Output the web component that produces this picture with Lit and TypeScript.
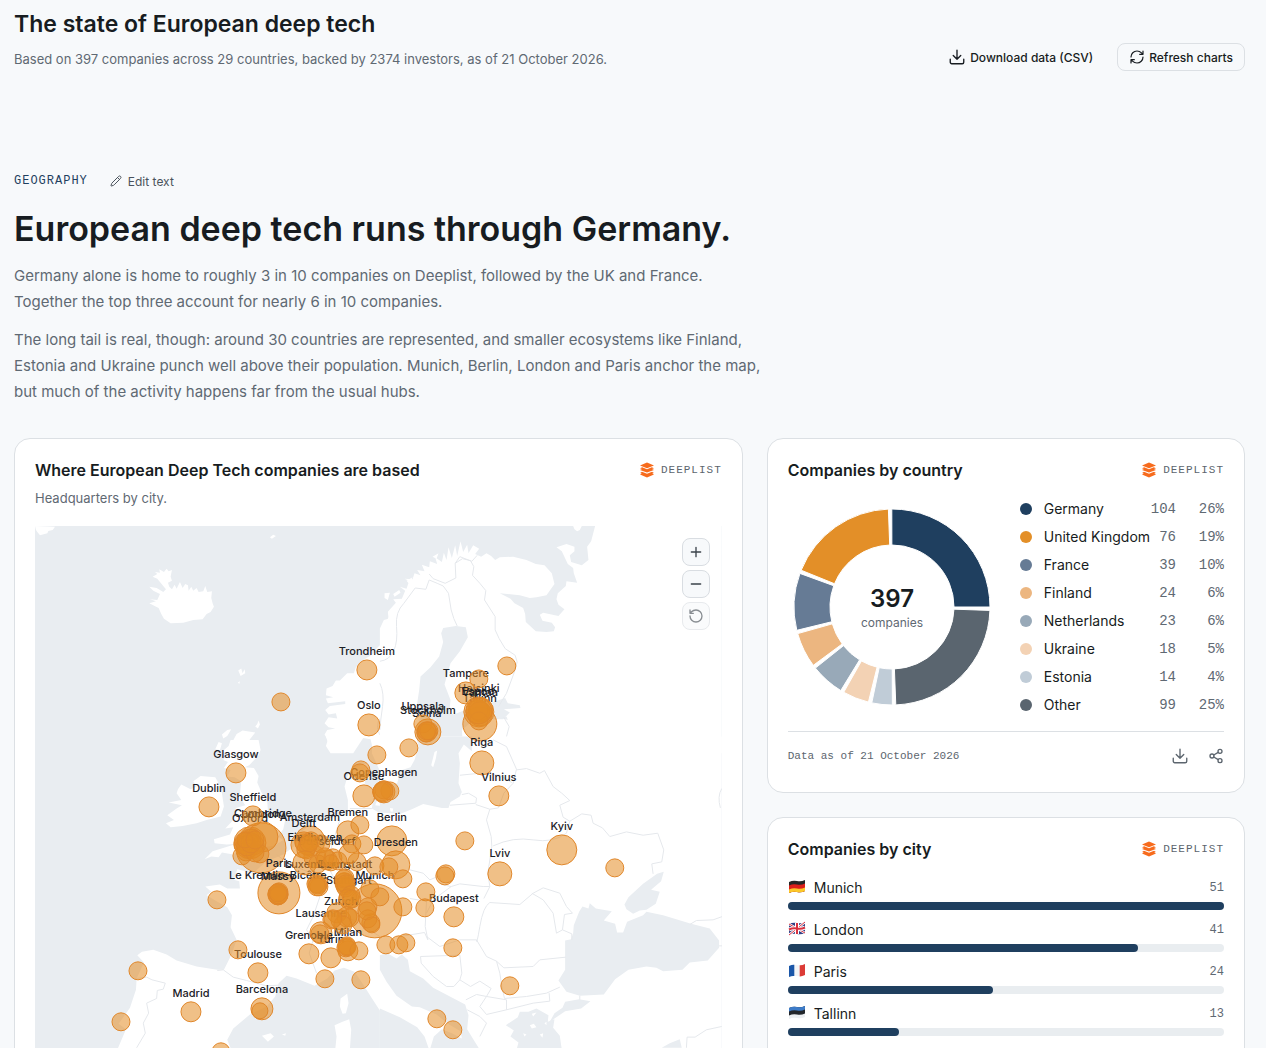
import { LitElement, html, svg, css, nothing } from "lit";
import { customElement, state } from "lit/decorators.js";

type City = [x: number, y: number, r: number, label?: string];

/* City bubbles, in map units: centre, radius, and a label for the larger hubs. */
const CITIES: City[] = [
  [375, 911, 27, "Munich"],
  [261, 848, 25, "London"],
  [279, 893, 21, "Paris"],
  [480, 724, 17, "Tallinn"],
  [250, 843, 16, "Oxford"],
  [562, 850, 15, "Kyiv"],
  [392, 841, 15, "Berlin"],
  [263, 837, 15, "Cambridge"],
  [310, 841, 15, "Amsterdam"],
  [479, 712, 15, "Helsinki"],
  [396, 865, 14, "Dresden"],
  [428, 732, 13, "Stockholm"],
  [304, 845, 13, "Delft"],
  [500, 874, 12, "Lviv"],
  [482, 763, 12, "Riga"],
  [262, 1009, 11, "Barcelona"],
  [369, 725, 11, "Oslo"],
  [348, 832, 11, "Bremen"],
  [364, 796, 11, "Odense"],
  [384, 792, 11, "Copenhagen"],
  [315, 857, 11, "Eindhoven"],
  [321, 933, 11, "Lausanne"],
  [466, 693, 11, "Tampere"],
  [367, 670, 10, "Trondheim"],
  [236, 773, 10, "Glasgow"],
  [209, 807, 10, "Dublin"],
  [253, 816, 10, "Sheffield"],
  [327, 860, 10, "Düsseldorf"],
  [318, 883, 10, "Luxembourg"],
  [345, 883, 10, "Darmstadt"],
  [278, 894, 10, "Le Kremlin-Bicêtre"],
  [278, 895, 10, "Massy"],
  [349, 899, 10, "Stuttgart"],
  [341, 920, 10, "Zurich"],
  [309, 954, 10, "Grenoble"],
  [331, 958, 10, "Turin"],
  [348, 951, 10, "Milan"],
  [258, 973, 10, "Toulouse"],
  [191, 1012, 10, "Madrid"],
  [454, 917, 10, "Budapest"],
  [499, 796, 10, "Vilnius"],
  [480, 711, 10, "Vantaa"],
  [478, 710, 10, "Espoo"],
  [427, 732, 10, "Solna"],
  [423, 724, 9, "Uppsala"],
  [243, 845, 9], [250, 838, 9], [254, 845, 10], [246, 852, 9], [248, 842, 10], [252, 838, 9], [244, 842, 9],
  [249, 849, 9], [242, 856, 9], [260, 854, 9], [255, 853, 9], [247, 846, 10], [251, 843, 10], [245, 840, 8], [255, 840, 9],
  [304, 843, 9], [308, 846, 9], [311, 841, 9], [306, 850, 9], [321, 844, 9], [309, 843, 9],
  [305, 863, 12], [318, 864, 9], [333, 858, 9], [338, 861, 9], [325, 857, 9], [331, 863, 8],
  [360, 825, 9], [352, 844, 9], [364, 845, 9], [357, 862, 9], [375, 866, 9], [349, 854, 10],
  [389, 867, 9], [403, 879, 9], [345, 878, 9], [344, 882, 9], [346, 888, 9], [345, 886, 9], [344, 879, 9], [346, 884, 9],
  [351, 895, 9], [348, 898, 9], [352, 899, 9], [370, 889, 9], [380, 897, 9], [319, 887, 9], [316, 884, 9], [318, 885, 9], [317, 887, 9],
  [368, 907, 9], [371, 923, 9], [368, 919, 9], [367, 911, 9], [372, 925, 8],
  [337, 913, 10], [347, 917, 10], [332, 920, 9], [350, 918, 9], [343, 925, 9], [333, 919, 9],
  [320, 934, 9], [347, 946, 9], [346, 948, 9], [347, 947, 8], [347, 947, 9],
  [279, 892, 9], [278, 896, 9], [279, 895, 9], [278, 893, 9],
  [359, 951, 9], [386, 945, 9], [399, 945, 9], [406, 943, 9], [453, 948, 9],
  [325, 979, 9], [361, 980, 9], [238, 950, 9], [217, 900, 9], [138, 971, 9], [121, 1022, 9], [221, 1052, 9], [260, 1011, 8],
  [426, 892, 9], [425, 908, 9], [403, 907, 9], [446, 874, 9], [445, 876, 9], [465, 841, 9], [615, 868, 9],
  [510, 986, 9], [437, 1019, 9], [453, 1030, 9],
  [479, 679, 9], [507, 666, 9], [478, 712, 12], [481, 710, 12], [480, 714, 12], [479, 721, 9], [479, 711, 13],
  [426, 733, 9], [429, 731, 9], [427, 731, 9], [409, 748, 9], [377, 755, 9], [361, 770, 9], [360, 773, 9],
  [390, 791, 9], [382, 792, 9], [384, 790, 9], [383, 792, 10], [281, 702, 9],
];

const COUNTRIES: [string, number, string, string][] = [
  ["Germany", 104, "26%", "#1f3f5f"],
  ["United Kingdom", 76, "19%", "#e38f28"],
  ["France", 39, "10%", "#667b95"],
  ["Finland", 24, "6%", "#ecb680"],
  ["Netherlands", 23, "6%", "#98a9b8"],
  ["Ukraine", 18, "5%", "#f3d2b4"],
  ["Estonia", 14, "4%", "#c0ccd7"],
  ["Other", 99, "25%", "#5a656f"],
];

const TOP_CITIES: [string, number, string][] = [
  ["Munich", 51, "de"],
  ["London", 41, "gb"],
  ["Paris", 24, "fr"],
  ["Tallinn", 13, "ee"],
];

/* Coastlines and borders by map sheet; each sheet is digitised at three units per map unit. */
const SHEETS: { at: string; land: string; sea?: string; isles?: string; borders: string }[] = [
  {
    at: "translate(20 430)",
    land:
      "M45 288L105 290 98 300 85 303 82 310 60 316 52 306 48 300Z" +
      "M388 520L408 514 390 508 412 510 420 492 400 482 388 470 410 474 430 486 438 478 412 446 398 440 412 432 405 426 420 428 418 418 432 426 440 416 446 424 456 420 452 440 456 452 444 458 448 470 456 478 464 464 470 476 480 456 488 474 496 462 504 466 506 482 514 470 520 482 530 474 536 486 550 484 556 468 562 486 576 484 574 504 578 520 582 530 572 546 560 552 548 568 520 570 490 578 452 580 432 566 424 552 416 534 404 528 Z" +
      "M1120 540L1100 572 1106 584 1090 602 1096 610 1080 628 1086 640 1070 656 1060 672 1030 690 1008 712 1002 730 982 730 960 752 948 752 938 768 920 776 918 796 940 802 918 806 924 820 976 814 976 822 930 828 916 840 926 854 948 850 952 866 926 862 914 880 926 892 946 896 922 900 914 914 924 930 918 948 932 970 1000 970 1030 924 1052 928 1062 970 1120 970Z" +
      "M620 970L634 942 650 912 668 902 706 908 690 928 680 944 708 946 718 960 714 970Z" +
      "M586 958L596 936 606 940 600 960ZM606 914L622 900 634 898 622 918 610 926ZM655 722L664 716 668 730 674 718 676 730 662 738ZM654 758L660 754 658 762ZM712 882L716 872 720 884 714 896 706 890ZM750 322L760 314 768 318 756 326ZM1094 490L1110 488 1104 510 1094 504Z",
    borders: "M1110 686Q1085 690 1084 730T1096 800T1084 860T1090 930",
  },
  {
    at: "translate(380 430)",
    land:
      "M0 596L12 570 26 566 24 545 48 518 40 508 66 506 76 482 60 470 80 476 88 452 74 446 98 448 104 430 122 436 112 420 134 424 126 404 148 412 150 394 172 402 166 382 186 396 192 368 200 390 206 352 216 384 226 346 232 378 242 334 250 366 262 344 266 370 280 346 298 356 286 372 304 380 320 370 334 378 346 390 360 382 400 380 440 390 468 402 494 406 516 430 524 462 500 496 470 502 450 504 420 496 360 490 392 506 404 520 430 534 436 552 438 576 468 604 500 606 522 604 526 592 516 578 488 572 480 554 490 548 536 558 554 538 536 524 530 508 534 490 558 468 560 454 592 458 582 430 580 414 564 402 546 364 530 352 560 342 584 350 584 364 570 376 574 396 606 406 626 390 622 350 634 334 646 288 1026 288 1026 970 236 970 252 944 274 962 268 920 248 926 246 900 270 880 332 868 370 868 390 848 372 838 422 834 420 826 384 820 376 804 340 816 256 840 222 854 208 850 212 810 194 764 212 700 240 664 264 622 258 592 228 588 190 594 184 610 190 636 178 680 152 712 122 740 118 780 112 820 122 862 110 900 118 930 110 970 0 970Z" +
      "M580 288L606 288 600 300 592 304 584 298ZM40 492L58 480 62 488 44 500ZM80 452L98 442 88 462ZM158 380L176 370 170 386Z",
    sea: "M380 860L366 864 384 870Z",
    borders:
      "M0 694Q30 690 42 662T50 590T72 520L106 474 138 478 148 450 172 460 190 468 206 490 214 540 222 566 232 588M148 432L160 446 196 460 228 444 226 400 248 386 272 392 282 410M226 400L240 380 276 394 292 376M282 410L278 436 300 460 318 482 314 510 346 560 346 600 358 626 376 656 406 676 412 696 406 720 380 790 356 830M372 862L388 890 380 920 388 970M0 760Q14 790 8 830T0 900",
  },
  {
    at: "translate(20 740)",
    land:
      "M442 226L470 206 486 196 446 188 484 180 470 160 474 148 484 134 512 148 530 140 520 124 542 108 586 112 598 134 606 160 612 200 602 230 560 240 530 250 488 258 452 262 438 250 462 240Z" +
      "M632 0L716 0 722 30 716 46 688 76 674 82 702 84 716 108 712 128 724 156 742 186 744 212 740 226 772 226 796 240 790 268 774 290 790 300 762 318 730 322 700 340 666 330 640 344 606 338 596 352 574 350 554 358 578 334 612 324 648 312 620 314 584 310 582 298 630 284 640 262 616 266 640 240 648 204 676 196 668 184 646 180 660 164 664 124 644 112 622 110 632 90 612 84 624 66 610 60 622 42 608 34 626 18Z" +
      "M974 140L984 106 1000 84 1044 70 1044 96 1034 130 1064 156 1056 206 1080 220 1120 212 1120 640 1082 646 1088 690 1120 726 1120 848 1080 812 1054 772 1030 734 1004 696 972 684 944 692 922 716 884 738 830 716 800 708 776 730 766 770 740 800 690 824 640 866 622 900 634 930 292 930 318 868 296 852 330 804 348 750 350 716 372 668 352 646 366 636 400 630 440 644 470 662 530 680 592 690 612 690 636 642 650 600 632 562 636 526 622 502 586 482 560 466 574 456 556 440 600 434 622 446 660 446 658 424 642 420 652 388 700 400 738 366 790 344 822 320 850 272 880 244 932 234 984 222 984 180Z" +
      "M918 -10L926 14 950 32 980 34 1004 20 1024 -10ZM1058 -10L1120 -10 1120 130 1096 132 1076 84 1056 40ZM1066 196L1076 172 1110 170 1096 200Z" +
      "M962 776L982 762 986 790 978 820 968 822 960 800ZM944 856L968 846 988 838 994 870 990 930 946 930 950 890ZM726 888L752 880 762 890 744 906ZM786 884L798 880 796 888Z",
    borders:
      "M592 692L610 690 640 712 680 722 740 738 776 736M350 716L380 712 396 720 436 730 430 748 412 752 410 776 380 790 386 820 370 850 376 880 350 924M770 344Q800 370 850 390T930 420L900 470 880 530 860 570 880 600 868 640 890 700M960 240Q940 300 930 340T940 410M880 530Q940 520 1000 540L1080 590M1000 110L1030 118M990 206L1056 206",
  },
  {
    at: "translate(380 740)",
    land: "M0 -10H1026V930H0Z",
    sea:
      "M108 -10L116 20 104 60 92 82 62 92 52 130 0 134 0 218 34 220 60 222 96 208 130 192 186 204 206 204 212 186 240 170 246 156 236 130 240 70 236 40 252 14 276 34 276 -10Z" +
      "M0 646L22 640 50 656 66 644 84 660 90 694 130 716 160 744 206 768 256 794 266 826 262 868 284 904 300 930 150 930 162 890 186 868 216 880 246 896 242 874 204 852 170 824 120 802 96 800 50 768 20 726 0 690ZM0 806L60 832 112 862 134 890 148 930 0 930Z" +
      "M378 856L414 832 420 816 446 816 470 806 506 826 504 846 524 838 520 864 540 888 546 930 410 930 416 908 392 890 402 872ZM510 846L524 820 548 804 556 786 598 778 632 784 604 806 556 814Z" +
      "M556 602L574 598 580 580 582 556 598 516 608 500 626 506 630 490 648 506 696 514 672 542 706 552 712 578 730 578 742 546 790 526 800 516 850 526 934 552 990 566 1018 602 1018 624 984 662 930 668 908 690 850 694 830 684 800 680 746 690 706 718 672 764 600 768 560 756 536 722 556 690Z" +
      "M734 494L746 472 790 432 832 402 852 396 844 424 814 450 840 456 828 492 800 510 780 512 760 522 740 508ZM846 924L870 910 900 898 906 924Z",
    isles: "M158 60L164 36 172 32 168 56 160 82 154 76ZM456 822L470 818 460 830ZM450 856L462 852 470 862 456 866ZM480 884L490 880 488 894ZM494 850L500 846 500 856ZM430 880L440 884 434 890ZM30 204L40 206 38 216 32 214Z",
    borders:
      "M210 196L288 190 290 174 266 160 246 164M288 194L330 208 356 204 372 160 400 130 410 88 380 20 340 0M240 106L300 100 360 106 396 128M410 90L440 86 480 100 494 92 520 140 546 160 570 182 540 196 550 232 570 244 606 222 634 226 640 250 668 264 690 290 740 276 790 286 834 280 852 330 846 366 816 372 820 402M330 208L320 240 334 290 336 320 324 400 330 440M340 318Q400 290 460 300T560 280L570 244M90 390L130 400 150 420 178 408 186 434 214 440 240 432 310 440 330 440 312 476M140 520L160 480 214 440M90 476L140 484 136 560 144 600 134 578 60 590M330 488L420 494 460 460 490 444 540 460 560 500 578 520 554 524 548 570 530 580 520 520 490 480 456 460M330 488Q310 500 300 560T290 600L240 600 180 620 140 590M290 600L320 650 350 664 372 684 460 680 480 660 558 652M122 650L240 646 246 700 240 720 222 740 200 740 160 710 124 670ZM240 720L272 740 300 724 334 746 320 770 290 764 258 780M320 770L380 780 380 810 320 824 300 800ZM350 664L360 700 366 740 374 776 440 770 500 760 540 742M380 810L460 790 510 784 508 760M262 810L300 830 320 850 300 890M548 570L576 582 576 600M930 554L950 542 1000 540 1028 530M1026 146Q1012 170 1022 204M920 924L922 892 946 892 980 870 1026 860M1018 618H1028M600 768V780",
  },
];

const ICONS = {
  download: svg`<path d="M21 15v4a2 2 0 0 1-2 2H5a2 2 0 0 1-2-2v-4M7 10l5 5 5-5M12 15V3"/>`,
  refresh: svg`<path d="M3 12a9 9 0 0 1 9-9 9.75 9.75 0 0 1 6.74 2.74L21 8M21 3v5h-5M21 12a9 9 0 0 1-9 9 9.75 9.75 0 0 1-6.74-2.74L3 16M8 16H3v5"/>`,
  pencil: svg`<path d="M21.17 6.81a2.8 2.8 0 0 0-3.98-3.98L3.84 16.17a2 2 0 0 0-.5.83L2 21.4a.5.5 0 0 0 .62.62l4.35-1.32a2 2 0 0 0 .83-.5ZM15 5l4 4"/>`,
  plus: svg`<path d="M5 12h14M12 5v14"/>`,
  minus: svg`<path d="M5 12h14"/>`,
  reset: svg`<path d="M3 12a9 9 0 1 0 9-9 9.75 9.75 0 0 0-6.74 2.74L3 8M3 3v5h5"/>`,
  share: svg`<circle cx="18" cy="5" r="3"/><circle cx="6" cy="12" r="3"/><circle cx="18" cy="19" r="3"/><path d="m8.6 13.5 6.8 4M15.4 6.5l-6.8 4"/>`,
};

const icon = (name: keyof typeof ICONS, size: number, width = 2) => html`
  <svg width=${size} height=${size} viewBox="0 0 24 24" fill="none" stroke="currentColor"
    stroke-width=${width} stroke-linecap="round" stroke-linejoin="round" aria-hidden="true">${ICONS[name]}</svg>`;

const WAVE = "M1 3Q5 1 9 2T17 1V12Q13 14 9 13T1 14Z";

const FLAGS: Record<string, unknown> = {
  de: svg`<path fill="#262626" d=${WAVE}/><path fill="#dd1f1a" d="M1 6.500Q5 4.500 9 5.500T17 4.500V12Q13 14 9 13T1 14Z"/><path fill="#fbc82a" d="M1 10.500Q5 8.500 9 9.500T17 8.500V12Q13 14 9 13T1 14Z"/>`,
  gb: svg`<path fill="#2f3f86" d=${WAVE}/><path stroke="#fff" stroke-width="2.400" d="M1 3L17 12M17 1L1 14"/><path stroke="#d8303f" stroke-width="1" d="M1 3L17 12M17 1L1 14"/><path stroke="#fff" stroke-width="4" d="M9 2V13M1 8.500Q5 6.500 9 7.500T17 6.500" fill="none"/><path stroke="#d8303f" stroke-width="2" d="M9 2V13M1 8.500Q5 6.500 9 7.500T17 6.500" fill="none"/>`,
  fr: svg`<path fill="#f3f4f6" d=${WAVE}/><path fill="#1a56a8" d="M1 3Q4 1.500 6.300 1.700V13Q4 12.500 1 14Z"/><path fill="#dc3b36" d="M11.700 2.200Q14 2.500 17 1V12Q14 13.500 11.700 13.400Z"/>`,
  ee: svg`<path fill="#eceff2" d=${WAVE}/><path fill="#22262b" d="M1 3Q5 1 9 2T17 1V8.500Q13 10.500 9 9.500T1 10.500Z"/><path fill="#3d7cc9" d="M1 3Q5 1 9 2T17 1V4.500Q13 6.500 9 5.500T1 6.500Z"/>`,
};

/** Ring segments run counter-clockwise from three o'clock with a two degree pad. */
function ringSegments(cx: number, cy: number, outer: number, inner: number) {
  const total = COUNTRIES.reduce((sum, c) => sum + c[1], 0);
  const pad = 2;
  const usable = 360 - pad * COUNTRIES.length;
  const point = (radius: number, deg: number) => {
    const a = (deg * Math.PI) / 180;
    return `${(cx + radius * Math.cos(a)).toFixed(2)} ${(cy - radius * Math.sin(a)).toFixed(2)}`;
  };
  let start = 0;
  return COUNTRIES.map(([, count, , color]) => {
    const end = start + (count / total) * usable;
    const d = `M${point(outer, start)}A${outer} ${outer} 0 0 0 ${point(outer, end)}L${point(inner, end)}A${inner} ${inner} 0 0 1 ${point(inner, start)}Z`;
    start = end + pad;
    return svg`<path class="slice" d=${d} fill=${color}/>`;
  });
}

const base = css`
  :host { display: block; font-family: Inter, "Liberation Sans", sans-serif; color: #171c21; }
  * { box-sizing: border-box; }
  h1, h2, h3, p, ul { margin: 0; padding: 0; }
  button { font: inherit; color: inherit; background: none; border: 0; padding: 0; margin: 0; cursor: pointer; display: inline-flex; align-items: center; justify-content: center; }
  svg { display: block; flex: none; }
`;

@customElement("chart-card")
class ChartCard extends LitElement {
  static properties = { heading: {}, note: {} };
  declare heading: string;
  declare note?: string;

  static styles = [base, css`
    .card { height: 100%; background: #fff; border: 1px solid #dce0e4; border-radius: 16px; padding: 20px; }
    .head { display: flex; align-items: center; justify-content: space-between; gap: 16px; }
    .title { font-size: 16px; line-height: 22px; font-weight: 600; }
    .brand { display: flex; align-items: center; gap: 6px; font-family: "Liberation Mono", monospace; font-size: 11px; line-height: 20px; letter-spacing: 1px; color: #5c656e; }
    .note { margin-top: 7px; font-size: 13px; line-height: 20px; color: #5f6973; }
  `];

  render() {
    return html`
      <section class="card">
        <div class="head">
          <h3 class="title">${this.heading}</h3>
          <span class="brand">
            <svg width="16" height="16" viewBox="0 0 16 16" aria-hidden="true" fill="#f76b1c">
              <path d="M8 .500L15 3.400 8 6.200 1 3.400Z"/>
              <path d="M1 6.300L3.200 5.300 8 7.200 12.800 5.300 15 6.300 13 7.100 15 7.900 8 10.600 1 7.900 3 7.100Z"/>
              <path d="M1 10.900L3 9.800 8 11.700 13 9.800 15 10.900 13.200 11.600 15 12.400 8 15.400 1 12.400 2.800 11.600Z"/>
            </svg>
            DEEPLIST
          </span>
        </div>
        ${this.note ? html`<p class="note">${this.note}</p>` : nothing}
        <slot></slot>
      </section>`;
  }
}

@customElement("city-map")
class CityMap extends LitElement {
  @state() private zoom = 1;

  static styles = [base, css`
    .frame { position: relative; margin-top: 18px; overflow: hidden; }
    .map { width: 100%; height: auto; background: #e9edf1; }
    .land { fill: #fff; stroke: none; }
    .sea { fill: #e9edf1; stroke: none; }
    .coast { fill: none; stroke: #e5e8ec; stroke-width: 1; }
    .bubble { fill: #e48d24; fill-opacity: .55; stroke: #e0872a; stroke-width: 1; }
    .label { font-size: 11px; font-weight: 500; fill: #1b2026; text-anchor: middle; }
    .tools { position: absolute; top: 12px; right: 12px; display: grid; gap: 4px; }
    .tool { width: 28px; height: 28px; border: 1px solid #d9dde2; border-radius: 8px; background: #f7f9fb; color: #3b434b; }
    .tool:disabled { opacity: .6; cursor: default; }
  `];

  render() {
    const w = 687 / this.zoom;
    const h = 524 / this.zoom;
    const box = `${35 + (687 - w) / 2} ${526 + (524 - h) / 2} ${w} ${h}`;
    return html`
      <div class="frame">
        <svg class="map" viewBox=${box} role="img" aria-label="Headquarters by city">
          ${SHEETS.map((s) => svg`
            <g transform=${`${s.at} scale(.33333)`}>
              <path class="land" d=${s.land}/>
              ${s.sea ? svg`<path class="sea" d=${s.sea}/>` : nothing}
              ${s.isles ? svg`<path class="land" d=${s.isles}/>` : nothing}
              <path class="coast" vector-effect="non-scaling-stroke" d=${s.borders}/>
            </g>`)}
          ${CITIES.map(([x, y, r, label]) => svg`
            <circle class="bubble" cx=${x} cy=${y} r=${r}/>
            ${label ? svg`<text class="label" x=${x} y=${y - r - 5}>${label}</text>` : nothing}`)}
        </svg>
        <div class="tools">
          <button class="tool" aria-label="Zoom in" @click=${() => (this.zoom = Math.min(4, this.zoom * 2))}>${icon("plus", 16)}</button>
          <button class="tool" aria-label="Zoom out" @click=${() => (this.zoom = Math.max(1, this.zoom / 2))}>${icon("minus", 16)}</button>
          <button class="tool" aria-label="Reset view" ?disabled=${this.zoom === 1} @click=${() => (this.zoom = 1)}>${icon("reset", 16)}</button>
        </div>
      </div>`;
  }
}

@customElement("country-breakdown")
class CountryBreakdown extends LitElement {
  static styles = [base, css`
    .body { display: flex; align-items: center; gap: 24px; margin-top: 14px; }
    .slice { stroke: #fff; stroke-width: 1; }
    .total { font-size: 24px; font-weight: 600; fill: #171c21; text-anchor: middle; }
    .unit { font-size: 12px; fill: #5f6973; text-anchor: middle; }
    .legend { flex: 1; border-collapse: collapse; font-size: 14px; line-height: 20px; }
    .legend th, .legend td { padding: 4px 0; }
    .name { font-weight: 400; text-align: left; white-space: nowrap; }
    .key { display: flex; align-items: center; gap: 12px; }
    .dot { width: 12px; height: 12px; border-radius: 50%; flex: none; }
    .num { font-family: "Liberation Mono", monospace; text-align: right; color: #5f6973; }
    .share { width: 48px; }
    .foot { display: flex; align-items: center; justify-content: space-between; margin-top: 12px; padding: 10px 0 2px; border-top: 1px solid #dce0e4; }
    .stamp { font-family: "Liberation Mono", monospace; font-size: 11px; line-height: 16px; color: #5c656e; }
    .actions { display: flex; gap: 8px; margin-right: -6px; color: #5c656e; }
    .action { width: 28px; height: 28px; }
  `];

  render() {
    return html`
      <div class="body">
        <svg width="208" height="208" viewBox="0 0 208 208" role="img" aria-label="Share of companies by country">
          ${ringSegments(104, 104, 98, 62)}
          <text class="total" x="104" y="104">397</text>
          <text class="unit" x="104" y="124">companies</text>
        </svg>
        <table class="legend">
          <tbody>
            ${COUNTRIES.map(([name, count, pct, color]) => html`
              <tr>
                <th class="name" scope="row"><span class="key"><span class="dot" style="background:${color}"></span>${name}</span></th>
                <td class="num">${count}</td>
                <td class="num share">${pct}</td>
              </tr>`)}
          </tbody>
        </table>
      </div>
      <div class="foot">
        <span class="stamp">Data as of 21 October 2026</span>
        <span class="actions">
          <button class="action" aria-label="Download chart">${icon("download", 18, 1.8)}</button>
          <button class="action" aria-label="Share chart">${icon("share", 16, 2)}</button>
        </span>
      </div>`;
  }
}

@customElement("city-ranking")
class CityRanking extends LitElement {
  static styles = [base, css`
    .list { list-style: none; display: grid; gap: 10px; margin-top: 18px; }
    .row { display: flex; align-items: center; gap: 8px; font-size: 14px; line-height: 20px; }
    .count { margin-left: auto; font-family: "Liberation Mono", monospace; font-size: 12px; color: #5f6973; }
    .track { margin-top: 4px; height: 8px; border-radius: 4px; background: #e9edf0; }
    .fill { height: 100%; border-radius: 4px; background: #1f3f5f; }
  `];

  render() {
    const top = TOP_CITIES[0][1];
    return html`
      <ul class="list">
        ${TOP_CITIES.map(([name, count, flag]) => html`
          <li>
            <div class="row">
              <svg width="18" height="18" viewBox="0 0 18 18" aria-hidden="true">${FLAGS[flag]}</svg>
              <span>${name}</span>
              <span class="count">${count}</span>
            </div>
            <div class="track"><div class="fill" style="width:${(count / top) * 100}%"></div></div>
          </li>`)}
      </ul>`;
  }
}

@customElement("app-root")
class AppRoot extends LitElement {
  static styles = [base, css`
    :host { min-height: 100vh; background: #f7f9fb; }
    .page { padding: 8px 21px 32px 14px; }
    .top { display: flex; align-items: flex-end; justify-content: space-between; gap: 24px; }
    .title { font-size: 23px; line-height: 32px; font-weight: 600; }
    .summary { margin-top: 7px; font-size: 13px; line-height: 24px; color: #5f6973; }
    .buttons { display: flex; gap: 12px; font-size: 12px; font-weight: 500; white-space: nowrap; }
    .button { height: 28px; padding: 0 11px; gap: 4px; border: 1px solid transparent; border-radius: 8px; }
    .outlined { border-color: #dce0e4; }
    .section { display: flex; align-items: center; gap: 22px; height: 28px; margin-top: 96px; }
    .eyebrow { font-family: "Liberation Mono", monospace; font-size: 12px; letter-spacing: 1px; color: #1f3f5f; }
    .edit { gap: 6px; font-size: 12px; color: #4a535c; }
    .headline { margin-top: 12px; font-size: 34px; line-height: 44px; font-weight: 600; }
    .text { margin-top: 12px; font-size: 15px; line-height: 26px; color: #5f6973; }
    .grid { display: grid; grid-template-columns: minmax(0, 32fr) minmax(0, 21fr); gap: 24px; margin-top: 33px; }
    .side { display: grid; grid-template-rows: auto 1fr; gap: 24px; }
  `];

  render() {
    return html`
      <main class="page">
        <header class="top">
          <div>
            <h1 class="title">The state of European deep tech</h1>
            <p class="summary">Based on 397 companies across 29 countries, backed by 2374 investors, as of 21 October 2026.</p>
          </div>
          <div class="buttons">
            <button class="button">${icon("download", 18, 1.8)}Download data (CSV)</button>
            <button class="button outlined">${icon("refresh", 16, 1.8)}Refresh charts</button>
          </div>
        </header>

        <div class="section">
          <span class="eyebrow">GEOGRAPHY</span>
          <button class="edit">${icon("pencil", 12, 2)}Edit text</button>
        </div>
        <div class="story">
          <h2 class="headline">European deep tech runs through Germany.</h2>
          <p class="text">Germany alone is home to roughly 3 in 10 companies on Deeplist, followed by the UK and France.<br>Together the top three account for nearly 6 in 10 companies.</p>
          <p class="text">The long tail is real, though: around 30 countries are represented, and smaller ecosystems like Finland,<br>Estonia and Ukraine punch well above their population. Munich, Berlin, London and Paris anchor the map,<br>but much of the activity happens far from the usual hubs.</p>
        </div>

        <div class="grid">
          <chart-card heading="Where European Deep Tech companies are based" note="Headquarters by city.">
            <city-map></city-map>
          </chart-card>
          <div class="side">
            <chart-card heading="Companies by country"><country-breakdown></country-breakdown></chart-card>
            <chart-card heading="Companies by city"><city-ranking></city-ranking></chart-card>
          </div>
        </div>
      </main>`;
  }
}
